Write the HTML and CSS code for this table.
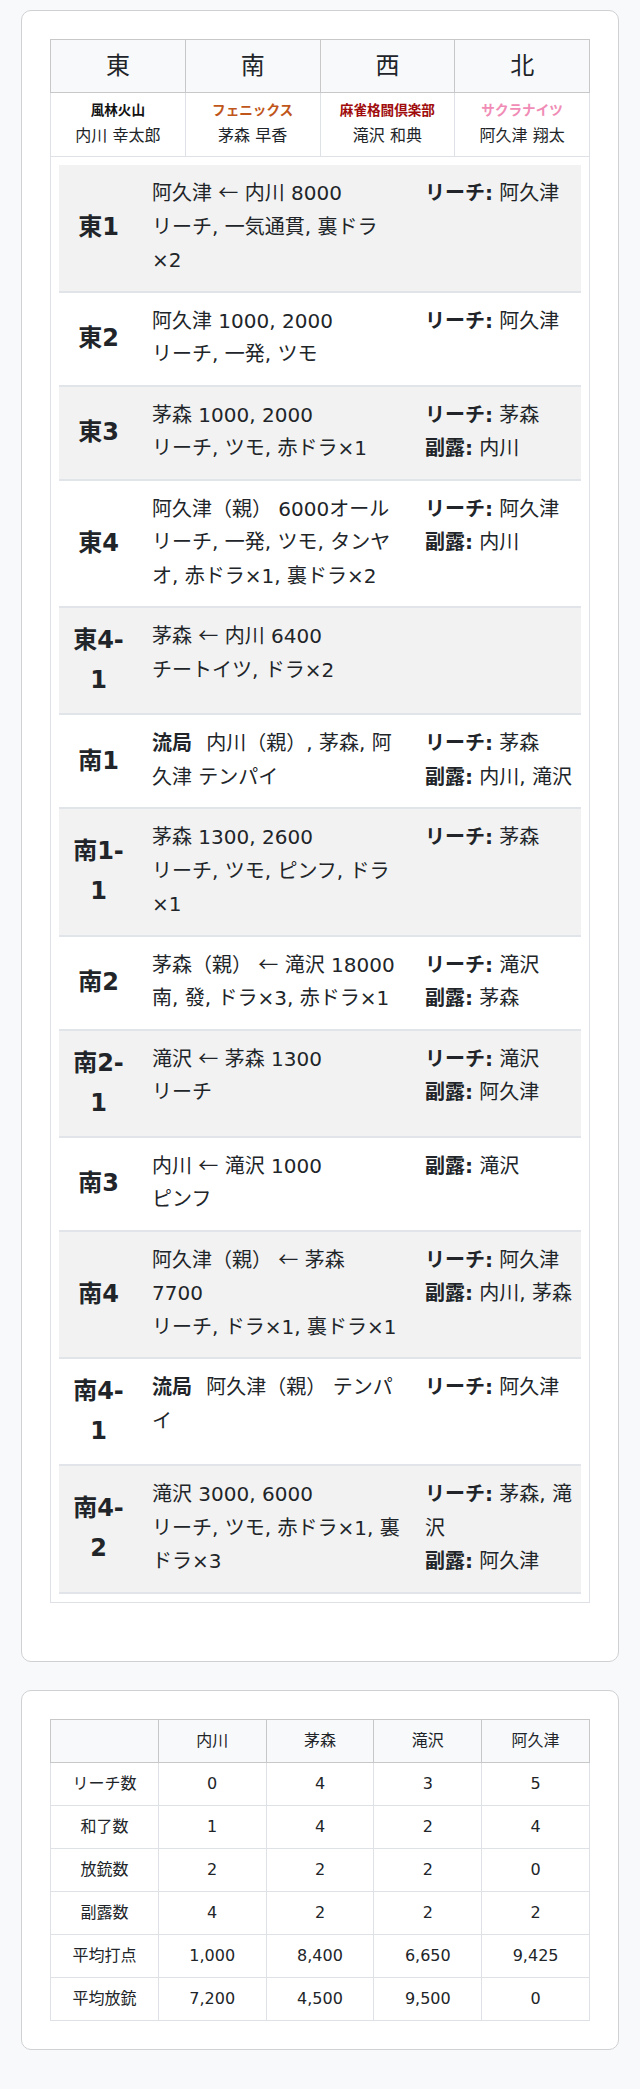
FILE: index.html
```html
<!DOCTYPE html>
<html lang="ja">
<head>
<meta charset="utf-8">
<title>対局結果</title>
<link rel="stylesheet" href="styles.css">
</head>
<body>
<div class="card">
  <table class="seat-table">
    <thead>
      <tr><th>東</th><th>南</th><th>西</th><th>北</th></tr>
    </thead>
    <tbody>
      <tr class="names">
        <td><div class="team t-furin">風林火山</div><div class="player">内川 幸太郎</div></td>
        <td><div class="team t-phoenix">フェニックス</div><div class="player">茅森 早香</div></td>
        <td><div class="team t-kakuto">麻雀格闘倶楽部</div><div class="player">滝沢 和典</div></td>
        <td><div class="team t-sakura">サクラナイツ</div><div class="player">阿久津 翔太</div></td>
      </tr>
      <tr>
        <td colspan="4" class="rounds-cell">
          <div class="rounds">
            <div class="round">
              <div class="label">東1</div>
              <div class="detail"><div>阿久津 <span class="arrow">←</span> 内川 8000</div><div>リーチ, 一気通貫, 裏ドラ×2</div></div>
              <div class="calls"><div><b>リーチ:</b> 阿久津</div></div>
            </div>
            <div class="round">
              <div class="label">東2</div>
              <div class="detail"><div>阿久津 1000, 2000</div><div>リーチ, 一発, ツモ</div></div>
              <div class="calls"><div><b>リーチ:</b> 阿久津</div></div>
            </div>
            <div class="round">
              <div class="label">東3</div>
              <div class="detail"><div>茅森 1000, 2000</div><div>リーチ, ツモ, 赤ドラ×1</div></div>
              <div class="calls"><div><b>リーチ:</b> 茅森</div><div><b>副露:</b> 内川</div></div>
            </div>
            <div class="round">
              <div class="label">東4</div>
              <div class="detail"><div>阿久津（親） 6000オール</div><div>リーチ, 一発, ツモ, タンヤオ, 赤ドラ×1, 裏ドラ×2</div></div>
              <div class="calls"><div><b>リーチ:</b> 阿久津</div><div><b>副露:</b> 内川</div></div>
            </div>
            <div class="round">
              <div class="label">東4-1</div>
              <div class="detail"><div>茅森 <span class="arrow">←</span> 内川 6400</div><div>チートイツ, ドラ×2</div></div>
              <div class="calls"></div>
            </div>
            <div class="round">
              <div class="label">南1</div>
              <div class="detail"><div><b class="draw">流局</b> 内川（親）, 茅森, 阿久津 テンパイ</div></div>
              <div class="calls"><div><b>リーチ:</b> 茅森</div><div><b>副露:</b> 内川, 滝沢</div></div>
            </div>
            <div class="round">
              <div class="label">南1-1</div>
              <div class="detail"><div>茅森 1300, 2600</div><div>リーチ, ツモ, ピンフ, ドラ×1</div></div>
              <div class="calls"><div><b>リーチ:</b> 茅森</div></div>
            </div>
            <div class="round">
              <div class="label">南2</div>
              <div class="detail"><div>茅森（親） <span class="arrow">←</span> 滝沢 18000</div><div>南, 發, ドラ×3, 赤ドラ×1</div></div>
              <div class="calls"><div><b>リーチ:</b> 滝沢</div><div><b>副露:</b> 茅森</div></div>
            </div>
            <div class="round">
              <div class="label">南2-1</div>
              <div class="detail"><div>滝沢 <span class="arrow">←</span> 茅森 1300</div><div>リーチ</div></div>
              <div class="calls"><div><b>リーチ:</b> 滝沢</div><div><b>副露:</b> 阿久津</div></div>
            </div>
            <div class="round">
              <div class="label">南3</div>
              <div class="detail"><div>内川 <span class="arrow">←</span> 滝沢 1000</div><div>ピンフ</div></div>
              <div class="calls"><div><b>副露:</b> 滝沢</div></div>
            </div>
            <div class="round">
              <div class="label">南4</div>
              <div class="detail"><div>阿久津（親） <span class="arrow">←</span> 茅森 7700</div><div>リーチ, ドラ×1, 裏ドラ×1</div></div>
              <div class="calls"><div><b>リーチ:</b> 阿久津</div><div><b>副露:</b> 内川, 茅森</div></div>
            </div>
            <div class="round">
              <div class="label">南4-1</div>
              <div class="detail"><div><b class="draw">流局</b> 阿久津（親） テンパイ</div></div>
              <div class="calls"><div><b>リーチ:</b> 阿久津</div></div>
            </div>
            <div class="round">
              <div class="label">南4-2</div>
              <div class="detail"><div>滝沢 3000, 6000</div><div>リーチ, ツモ, 赤ドラ×1, 裏ドラ×3</div></div>
              <div class="calls"><div><b>リーチ:</b> 茅森, 滝沢</div><div><b>副露:</b> 阿久津</div></div>
            </div>
          </div>
        </td>
      </tr>
    </tbody>
  </table>
</div>

<div class="card">
  <table class="stats-table">
    <thead>
      <tr><th></th><th>内川</th><th>茅森</th><th>滝沢</th><th>阿久津</th></tr>
    </thead>
    <tbody>
      <tr><td>リーチ数</td><td>0</td><td>4</td><td>3</td><td>5</td></tr>
      <tr><td>和了数</td><td>1</td><td>4</td><td>2</td><td>4</td></tr>
      <tr><td>放銃数</td><td>2</td><td>2</td><td>2</td><td>0</td></tr>
      <tr><td>副露数</td><td>4</td><td>2</td><td>2</td><td>2</td></tr>
      <tr><td>平均打点</td><td>1,000</td><td>8,400</td><td>6,650</td><td>9,425</td></tr>
      <tr><td>平均放銃</td><td>7,200</td><td>4,500</td><td>9,500</td><td>0</td></tr>
    </tbody>
  </table>
</div>
</body>
</html>
```

FILE: styles.css
```css
html, body {
  margin: 0;
  padding: 0;
}
body {
  background: #f8f9fa;
  color: #212529;
  font-family: "DejaVu Sans", "Noto Sans CJK JP", sans-serif;
  font-size: 16px;
  line-height: 1.67;
  padding: 10px 21px 0;
}
.card {
  background: #fff;
  border: 1px solid #cfd1d3;
  border-radius: 10px;
  padding: 28px;
  margin-bottom: 28px;
}
.seat-table {
  width: 100%;
  border-collapse: collapse;
  table-layout: fixed;
  margin-bottom: 30px;
}
.seat-table th {
  background: #f8f9fa;
  border: 1px solid #c8c8c8;
  font-size: 24px;
  font-weight: normal;
  line-height: 36px;
  padding: 8px;
  text-align: center;
}
.seat-table td {
  border: 1px solid #dee2e6;
}
.names td {
  padding: 6px 4px;
  text-align: center;
}
.team {
  font-size: 13.6px;
  font-weight: bold;
  line-height: 22px;
}
.player {
  font-size: 16px;
  line-height: 29px;
}
.t-furin { color: #111; }
.t-phoenix { color: #c0561a; }
.t-kakuto { color: #a00c0c; }
.t-sakura { color: #f08cb6; }

.rounds-cell {
  padding: 8px;
}
.round {
  display: grid;
  grid-template-columns: 79px 273px 1fr;
  padding: 12px 0 13px;
  border-bottom: 2px solid #e1e4e8;
  font-size: 20px;
  line-height: 33.5px;
}
.round:nth-child(odd) {
  background: #f2f2f2;
}
.label {
  align-self: center;
  padding: 0 13px;
  font-size: 24px;
  font-weight: bold;
  line-height: 40px;
  text-align: center;
  word-break: break-all;
}
.detail {
  padding: 0 10px 0 14px;
}
.arrow {
  font-family: "Noto Sans CJK JP", sans-serif;
  line-height: 1;
}
.calls {
  padding: 0 4px 0 14px;
}
.draw {
  margin-right: 8px;
}

.stats-table {
  width: 100%;
  border-collapse: collapse;
  table-layout: fixed;
}
.stats-table th,
.stats-table td {
  text-align: center;
  padding: 8px;
  font-size: 16px;
  line-height: 26px;
}
.stats-table th {
  background: #f8f9fa;
  border: 1px solid #c8c8c8;
  font-weight: normal;
}
.stats-table td {
  border: 1px solid #dee2e6;
}
```
